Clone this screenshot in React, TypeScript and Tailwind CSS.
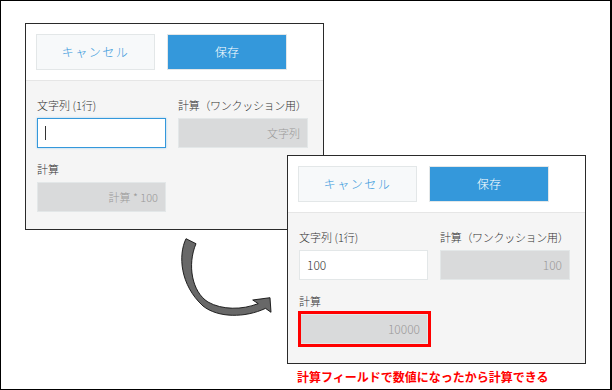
import React from "react";

const font = { fontFamily: '"Noto Sans CJK JP", "Noto Sans", sans-serif' };

function Panel({
  left,
  top,
  height,
  value,
  calc1,
  calc2,
  numSize,
  focused,
  highlight,
}: {
  left: string;
  top: string;
  height: string;
  value: string;
  calc1: string;
  calc2: string;
  numSize: string;
  focused?: boolean;
  highlight?: boolean;
}) {
  return (
    <div
      className={`absolute ${left} ${top} ${height} w-[299px] border border-[#2a2a2a] bg-[#f5f5f5] flex flex-col font-light`}
    >
      <div className="bg-white h-[57px] flex items-start gap-[12px] pl-[10px] pt-[10px] border-b border-[#e6e6e6]">
        <div className="w-[119px] h-[36px] bg-[#f7f9fa] border border-[#e3e7e8] flex items-center justify-center text-[12px] text-[#3498db] tracking-[1.5px]">
          キャンセル
        </div>
        <div className="w-[120px] h-[36px] bg-[#3498db] border border-[#e3e7e8] flex items-center justify-center text-[12px] text-white">
          保存
        </div>
      </div>
      <div className="flex flex-col pl-[11px] pt-[16px]">
        <div className="flex gap-[12px]">
          <div className="flex flex-col w-[129px]">
            <div className="text-[11px] leading-[16px] text-[#333] h-[16px] whitespace-nowrap">
              文字列 (1行)
            </div>
            <div
              className={`mt-[5px] h-[30px] bg-white flex items-center pl-[7px] text-[12px] text-[#333] ${
                focused
                  ? "border border-[#3498db] shadow-[0_0_2px_#9fcdee]"
                  : "border border-[#e3e7e8]"
              }`}
            >
              {focused ? (
                <span className="inline-block w-[1px] h-[14px] bg-[#333]"></span>
              ) : (
                value
              )}
            </div>
          </div>
          <div className="flex flex-col w-[130px]">
            <div className="text-[11px] leading-[16px] text-[#333] h-[16px] whitespace-nowrap tracking-[-0.3px]">
              計算（ワンクッション用）
            </div>
            <div
              className={`mt-[5px] h-[30px] bg-[#d9dadb] border border-[#e3e7e8] flex items-center justify-end pr-[7px] ${numSize} text-[#999]`}
            >
              {calc1}
            </div>
          </div>
        </div>
        <div className="flex flex-col w-[129px] mt-[13px]">
          <div className="text-[11px] leading-[16px] text-[#333] h-[16px]">計算</div>
          <div
            className={`relative mt-[5px] h-[30px] bg-[#d9dadb] border border-[#e3e7e8] flex items-center justify-end pr-[7px] ${numSize} text-[#999]`}
          >
            {calc2}
            {highlight && (
              <div className="absolute -top-[4px] -bottom-[4px] -left-[2px] -right-[4px] border-[3px] border-[#ff0000]"></div>
            )}
          </div>
        </div>
      </div>
    </div>
  );
}

export default function App() {
  return (
    <div
      className="relative w-[612px] h-[390px] bg-white border border-black border-r-2 overflow-hidden"
      style={font}
    >
      <Panel
        left="left-[24px]"
        top="top-[22px]"
        height="h-[207px]"
        value=""
        calc1="文字列"
        calc2="計算 * 100"
        numSize="text-[11px]"
        focused
      />
      <svg
        className="absolute left-[169px] top-[229px]"
        width="110"
        height="95"
        viewBox="0 0 110 95"
      >
        <path
          d="M 16 8.7 C 8 25, 10 55, 33 76 C 48 88, 75 88, 95.5 78.4 L 101 82.3 L 100 67.7 L 82.7 70 L 88.2 73.6 C 72 80, 52 80, 38 72 C 22 62, 17 35, 26 13.7 Z"
          fill="#686868"
          stroke="#111"
          strokeWidth="0.9"
          strokeLinejoin="miter"
        />
      </svg>
      <Panel
        left="left-[286px]"
        top="top-[154px]"
        height="h-[209px]"
        value="100"
        calc1="100"
        calc2="10000"
        numSize="text-[12px]"
        highlight
      />
      <div className="absolute left-[296px] top-[369px] text-[12px] leading-[14px] font-bold text-[#ff0000] whitespace-nowrap">
        計算フィールドで数値になったから計算できる
      </div>
    </div>
  );
}
